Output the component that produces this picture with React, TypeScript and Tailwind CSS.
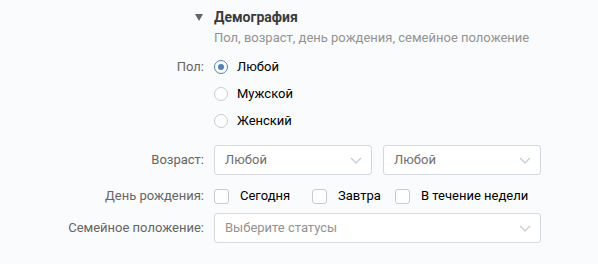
import React from 'react';

const Chevron = () => (
  <svg width="12" height="7" viewBox="0 0 12 7" fill="none" className="shrink-0">
    <path d="M1 1l5 5 5-5" stroke="#c0cad5" strokeWidth="1.2" />
  </svg>
);

const Select: React.FC<{ value: string; muted?: boolean; className?: string }> = ({ value, muted, className }) => (
  <div
    className={`h-[30px] flex items-center justify-between pl-[10px] pr-[9px] bg-white border border-[#d3d9de] rounded-[3px] ${className ?? ''}`}
  >
    <span className={muted ? 'text-[#939393]' : 'text-[#6f6f6f]'}>{value}</span>
    <Chevron />
  </div>
);

const Radio: React.FC<{ label: string; checked?: boolean }> = ({ label, checked }) => (
  <div className="h-[27px] flex items-center gap-[9px]">
    <span
      className={`w-[14px] h-[14px] rounded-full border flex items-center justify-center bg-white ${
        checked ? 'border-[#5181b8]' : 'border-[#c5ccd4]'
      }`}
    >
      {checked && <span className="w-[6px] h-[6px] rounded-full bg-[#5181b8]" />}
    </span>
    <span className="text-black">{label}</span>
  </div>
);

const Checkbox: React.FC<{ label: string; className?: string }> = ({ label, className }) => (
  <div className={`flex items-center gap-[11px] ${className ?? ''}`}>
    <span className="w-[15px] h-[15px] rounded-[3px] border border-[#c5ccd4] bg-white" />
    <span className="text-black">{label}</span>
  </div>
);

const Row: React.FC<{ label?: string; className?: string; children: React.ReactNode }> = ({ label, className, children }) => (
  <div className={`flex ${className ?? ''}`}>
    <div className="w-[214px] shrink-0 pr-[10px] text-right text-[#656565]">{label}</div>
    <div className="flex-1">{children}</div>
  </div>
);

export default function App() {
  return (
    <div
      className="w-[598px] h-[264px] bg-[#fafbfc] text-[13px] leading-[20px] overflow-hidden pt-[7px]"
      style={{ fontFamily: 'Roboto, "Open Sans", sans-serif' }}
    >
      <div className="flex items-center h-[20px]">
        <div className="w-[214px] shrink-0 flex justify-end pr-[11px]">
          <svg width="8" height="7" viewBox="0 0 8 7">
            <path d="M0 0h8L4 7z" fill="#656565" />
          </svg>
        </div>
        <span className="font-bold text-[14px] text-[#3b3b3b]">Демография</span>
      </div>
      <Row className="h-[20px] mt-[1px]">
        <span className="text-[#939393]">Пол, возраст, день рождения, семейное положение</span>
      </Row>

      <div className="flex mt-[5px]">
        <div className="w-[214px] shrink-0 pr-[10px] text-right text-[#656565] h-[27px] flex items-center justify-end">
          Пол:
        </div>
        <div className="flex flex-col">
          <Radio label="Любой" checked />
          <Radio label="Мужской" />
          <Radio label="Женский" />
        </div>
      </div>

      <Row label="Возраст:" className="mt-[11px] items-center">
        <div className="flex gap-[11px] w-[327px]">
          <Select value="Любой" className="w-[158px]" />
          <Select value="Любой" className="w-[158px]" />
        </div>
      </Row>

      <Row label="День рождения:" className="mt-[10px] h-[22px] items-center">
        <div className="flex items-center">
          <Checkbox label="Сегодня" className="w-[98px]" />
          <Checkbox label="Завтра" className="w-[83px]" />
          <Checkbox label="В течение недели" />
        </div>
      </Row>

      <Row label="Семейное положение:" className="mt-[6px] items-center">
        <Select value="Выберите статусы" muted className="w-[327px]" />
      </Row>
    </div>
  );
}
